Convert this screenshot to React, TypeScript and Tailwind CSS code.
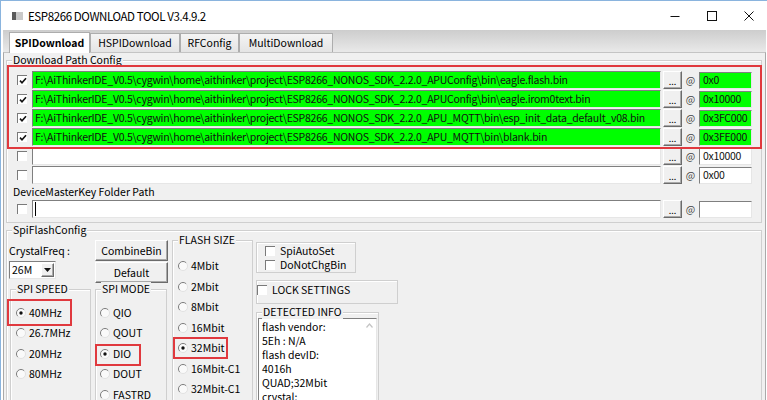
import React from "react";

const sunken =
  "border border-t-[#7f7f7f] border-l-[#7f7f7f] border-r-[#e6e6e6] border-b-[#e6e6e6]";
const raised =
  "border border-t-white border-l-white border-r-[#6b6b6b] border-b-[#6b6b6b] bg-[#f0f0f0] shadow-[inset_-1px_-1px_0_#a9a9a9]";
const etched = "border border-[#cfcfcf] shadow-[inset_1px_1px_0_#fff]";

const root = ["F:", "AiThinkerIDE_V0.5", "cygwin", "home", "aithinker", "project"].join("\\");
const sdk = (app: string, file: string) =>
  [root, "ESP8266_NONOS_SDK_2.2.0_" + app, "bin", file].join("\\");

type RowProps = { checked?: boolean; green?: boolean; path?: string; addr?: string; cursor?: boolean };

const rows: RowProps[] = [
  { checked: true, green: true, path: sdk("APUConfig", "eagle.flash.bin"), addr: "0x0" },
  { checked: true, green: true, path: sdk("APUConfig", "eagle.irom0text.bin"), addr: "0x10000" },
  { checked: true, green: true, path: sdk("APU_MQTT", "esp_init_data_default_v08.bin"), addr: "0x3FC000" },
  { checked: true, green: true, path: sdk("APU_MQTT", "blank.bin"), addr: "0x3FE000" },
];

function Check({ checked }: { checked?: boolean }) {
  return (
    <span className="flex h-[10px] w-[10px] shrink-0 items-center justify-center border-l border-t border-l-[#7a7a7a] border-t-[#7a7a7a] bg-white">
      {checked && (
        <svg width="8" height="8" viewBox="0 0 8 8">
          <path d="M1 3.6 L3 5.8 L7 1.2" fill="none" stroke="#111" strokeWidth="1.6" />
        </svg>
      )}
    </span>
  );
}

function RadioDot({ on }: { on?: boolean }) {
  return (
    <svg width="12" height="12" viewBox="0 0 12 12" className="shrink-0">
      <circle cx="6" cy="6" r="4.5" fill="#fafafa" />
      <path d="M2.8 9.2 A4.5 4.5 0 0 1 9.2 2.8" fill="none" stroke="#7d7d7d" strokeWidth="1" />
      <path d="M9.2 2.8 A4.5 4.5 0 0 1 2.8 9.2" fill="none" stroke="#e2e2e2" strokeWidth="1" />
      {on && <circle cx="6" cy="6" r="1.7" fill="#111" />}
    </svg>
  );
}

function Radio({ label, on, mark }: { label: string; on?: boolean; mark?: string }) {
  return (
    <div className="relative flex h-[20.5px] items-center">
      <RadioDot on={on} />
      <span className="ml-[2px]">{label}</span>
      {mark && <span className={`pointer-events-none absolute border-2 border-[#e0393e] ${mark}`} />}
    </div>
  );
}

function Group({
  label,
  className = "",
  children,
}: {
  label?: string;
  className?: string;
  children?: React.ReactNode;
}) {
  return (
    <div className={`relative ${etched} ${className}`}>
      {label && (
        <span className="absolute -top-[8px] left-[5px] bg-[#f0f0f0] px-[1px] leading-[14px]">{label}</span>
      )}
      {children}
    </div>
  );
}

function PathRow({ checked, green, path, addr, cursor }: RowProps) {
  const bg = green ? "bg-[#00ff00]" : "bg-white";
  return (
    <div className="flex h-[18px] items-center">
      <span className="ml-[10px]">
        <Check checked={checked} />
      </span>
      <div
        className={`ml-[5px] flex h-[18px] w-[629px] items-center overflow-hidden whitespace-nowrap pl-[2px] tracking-[-0.25px] text-[#111] ${sunken} ${bg}`}
      >
        {cursor && <span className="h-[14px] w-px bg-black" />}
        {path}
      </div>
      <div className={`ml-[2px] flex h-[18px] w-[19px] items-center justify-center pt-[2px] text-[9px] leading-none ${raised}`}>
        ...
      </div>
      <span className="flex w-[17px] justify-center text-[10px] text-[#444]">@</span>
      <div className={`flex h-[17px] w-[53px] items-center overflow-hidden whitespace-nowrap pl-[3px] tracking-[-0.3px] text-[#111] ${sunken} ${bg}`}>
        {addr}
      </div>
    </div>
  );
}

function TitleBar() {
  return (
    <div className="flex h-[29px] items-center bg-white">
      <svg className="ml-[11px]" width="11" height="8" viewBox="0 0 11 8">
        <rect x="0" y="0" width="11" height="8" fill="#c9c9c9" />
        <rect x="0" y="0" width="4" height="8" fill="#5b5b5b" />
      </svg>
      <span className="ml-[5px] text-[11.5px] tracking-[-0.4px]">ESP8266 DOWNLOAD TOOL V3.4.9.2</span>
      <div className="ml-auto flex h-full">
        <div className="flex w-[37px] items-center justify-center">
          <svg width="10" height="10" viewBox="0 0 10 10">
            <path d="M0.5 5.5 H9.5" stroke="#111" strokeWidth="1" />
          </svg>
        </div>
        <div className="flex w-[37px] items-center justify-center">
          <svg width="10" height="10" viewBox="0 0 10 10">
            <rect x="0.5" y="0.5" width="9" height="9" fill="none" stroke="#111" strokeWidth="1" />
          </svg>
        </div>
        <div className="flex w-[37px] items-center justify-center">
          <svg width="10" height="10" viewBox="0 0 10 10">
            <path d="M0.5 0.5 L9.5 9.5 M9.5 0.5 L0.5 9.5" stroke="#111" strokeWidth="1" />
          </svg>
        </div>
      </div>
    </div>
  );
}

function TabStrip() {
  const tab = "flex h-[19px] items-center justify-center border border-b-0 border-[#adadad] bg-gradient-to-b from-[#f4f4f4] to-[#e4e4e4]";
  return (
    <div className="ml-[2px] flex h-[22px] w-[763px] items-end bg-gradient-to-b from-[#cdcdcd] to-[#e9e9e9] pl-[6px]">
      <div className="relative z-10 -mb-px flex h-[21px] w-[81px] items-center justify-center border border-b-0 border-[#adadad] bg-white font-bold">
        SPIDownload
      </div>
      <div className={`${tab} w-[90px]`}>HSPIDownload</div>
      <div className={`${tab} w-[59px]`}>RFConfig</div>
      <div className={`${tab} w-[94px]`}>MultiDownload</div>
    </div>
  );
}

function PathConfig() {
  return (
    <Group label="Download Path Config" className="ml-[2px] mt-[7px] w-[756px] pb-[4px] pt-[10px]">
      <div className="relative flex flex-col gap-px">
        {rows.map((r, i) => (
          <PathRow key={i} {...r} />
        ))}
        <span className="pointer-events-none absolute left-0 -right-[1px] -top-[6px] -bottom-[3px] border-2 border-[#e0393e]" />
      </div>
      <div className="mt-px flex flex-col gap-px">
        <PathRow addr="0x10000" />
        <PathRow addr="0x00" />
      </div>
      <div className="mt-px h-[14px] pl-[6px]">DeviceMasterKey Folder Path</div>
      <div className="mt-px">
        <PathRow cursor />
      </div>
    </Group>
  );
}

function SpiFlashConfig() {
  return (
    <Group label="SpiFlashConfig" className="ml-[2px] mt-[7px] h-[200px] w-[756px]">
      <div className="flex items-start">
        {/* crystal + speed */}
        <div className="ml-[2px] flex w-[82px] flex-col">
          <div className="mt-[13px] h-[14px]">CrystalFreq :</div>
          <div className={`mt-[3px] flex h-[18px] w-[47px] items-center bg-white ${sunken}`}>
            <span className="flex-1 pl-[2px]">26M</span>
            <span className={`mr-px flex h-[14px] w-[13px] items-center justify-center ${raised}`}>
              <svg width="7" height="4" viewBox="0 0 7 4">
                <path d="M0 0 H7 L3.5 4 Z" fill="#111" />
              </svg>
            </span>
          </div>
          <Group label="SPI SPEED" className="ml-px mt-[10px] h-[120px] w-[81px]">
            <div className="pl-[4px] pt-[12.5px]">
              <Radio label="40MHz" on mark="-left-[8px] -top-[4px] h-[27px] w-[65px]" />
              <Radio label="26.7MHz" />
              <Radio label="20MHz" />
              <Radio label="80MHz" />
            </div>
          </Group>
        </div>
        {/* buttons + mode */}
        <div className="ml-[4px] flex w-[73px] flex-col">
          <div className={`mt-[9px] flex h-[21px] items-center justify-center ${raised}`}>CombineBin</div>
          <div className={`mt-[1px] flex h-[21px] items-center justify-center ${raised}`}>Default</div>
          <Group label="SPI MODE" className="mt-[6px] h-[120px] w-[72px]">
            <div className="pl-[3px] pt-[12.5px]">
              <Radio label="QIO" />
              <Radio label="QOUT" />
              <Radio label="DIO" on mark="-left-[4px] top-0 h-[22px] w-[46px]" />
              <Radio label="DOUT" />
              <Radio label="FASTRD" />
            </div>
          </Group>
        </div>
        {/* flash size */}
        <Group label="FLASH SIZE" className="ml-[4px] mt-[9px] h-[170px] w-[81px]">
          <div className="pl-[4px] pt-[15px]">
            <Radio label="4Mbit" />
            <Radio label="2Mbit" />
            <Radio label="8Mbit" />
            <Radio label="16Mbit" />
            <Radio label="32Mbit" on mark="-left-[4px] -top-[1px] h-[22px] w-[55px]" />
            <Radio label="16Mbit-C1" />
            <Radio label="32Mbit-C1" />
          </div>
        </Group>
        {/* options + info */}
        <div className="ml-[3px] flex flex-col">
          <Group className="mt-[11px] h-[31px] w-[100px] pl-[8px] pt-px">
            <div className="flex h-[14px] items-center gap-[5px]">
              <Check />
              <span>SpiAutoSet</span>
            </div>
            <div className="flex h-[14px] items-center gap-[5px]">
              <Check />
              <span>DoNotChgBin</span>
            </div>
          </Group>
          <Group className="mt-[7px] h-[24px] w-[142px]">
            <div className="mt-[2px] flex h-[14px] items-center gap-[5px]">
              <Check />
              <span>LOCK SETTINGS</span>
            </div>
          </Group>
          <Group label="DETECTED INFO" className="mt-[8px] h-[110px] w-[123px]">
            <div className={`ml-px mt-[5px] flex h-[100px] w-[119px] bg-white ${sunken}`}>
              <div className="flex-1 pl-[3px] pt-px">
                <div className="h-[14px]">flash vendor:</div>
                <div className="h-[14px]">5Eh : N/A</div>
                <div className="h-[14px]">flash devID:</div>
                <div className="h-[14px]">4016h</div>
                <div className="h-[14px]">QUAD;32Mbit</div>
                <div className="h-[14px]">crystal:</div>
              </div>
              <div className="flex w-[13px] justify-center pt-[4px]">
                <svg width="7" height="5" viewBox="0 0 7 5">
                  <path d="M0.5 4.5 L3.5 1 L6.5 4.5" fill="none" stroke="#c4c4c4" strokeWidth="1.2" />
                </svg>
              </div>
            </div>
          </Group>
        </div>
      </div>
    </Group>
  );
}

export default function App() {
  return (
    <div className="h-[400px] w-[767px] overflow-hidden border-l border-t border-[#8ab4de] bg-white font-['Noto_Sans_CJK_SC','Noto_Sans',sans-serif] text-[10.5px] leading-[14px] text-black">
      <TitleBar />
      <TabStrip />
      <div className="ml-[2px] h-[400px] w-[763px] border-l border-r border-t border-l-[#a9a9a9] border-r-[#a9a9a9] border-t-[#c4c4c4] bg-[#f0f0f0]">
        <PathConfig />
        <SpiFlashConfig />
      </div>
    </div>
  );
}
